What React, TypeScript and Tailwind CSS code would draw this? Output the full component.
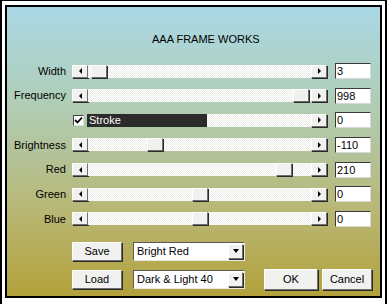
import React from 'react'

type Row = { label: string; value: string; thumb?: number; stroke?: boolean }

// thumb = left offset of the thumb inside the track (track is 223px wide)
const rows: Row[] = [
  { label: 'Width', value: '3', thumb: 3 },
  { label: 'Frequency', value: '998', thumb: 205 },
  { label: '', value: '0', stroke: true },
  { label: 'Brightness', value: '-110', thumb: 59 },
  { label: 'Red', value: '210', thumb: 188 },
  { label: 'Green', value: '0', thumb: 104 },
  { label: 'Blue', value: '0', thumb: 104 },
]

const raised =
  'bg-[#f1f1ef] border border-t-white border-l-white border-r-[#6f6f6f] border-b-[#6f6f6f] shadow-[1px_1px_0_#2a2a2a]'

function ArrowButton({ dir }: { dir: 'left' | 'right' }) {
  return (
    <div className={`w-[16px] h-[13px] shrink-0 flex items-center justify-center ${raised}`}>
      {dir === 'left' ? (
        <div className="w-0 h-0 border-y-[3px] border-y-transparent border-r-[3px] border-r-black" />
      ) : (
        <div className="w-0 h-0 border-y-[3px] border-y-transparent border-l-[3px] border-l-black" />
      )}
    </div>
  )
}

function Track({ children }: { children?: React.ReactNode }) {
  return (
    <div className="relative flex-1 h-[13px] bg-[#f6f6f4] bg-[repeating-conic-gradient(#ffffff_0_25%,#ecece9_0_50%)] bg-size-[2px_2px]">
      {children}
    </div>
  )
}

function Dropdown({ text }: { text: string }) {
  return (
    <div className="w-[112px] h-[19px] flex items-center bg-white border border-t-[#5a5a5a] border-l-[#5a5a5a] border-r-[#e8e8e8] border-b-[#e8e8e8]">
      <span className="flex-1 pl-[3px] text-[11px] leading-none text-black">{text}</span>
      <div className={`w-[15px] h-[15px] mr-[1px] flex items-center justify-center ${raised}`}>
        <div className="w-0 h-0 border-x-[3.5px] border-x-transparent border-t-[4px] border-t-black" />
      </div>
    </div>
  )
}

function Button({ text, w, h }: { text: string; w: string; h: string }) {
  return (
    <div className={`${w} ${h} flex items-center justify-center text-[11px] text-black ${raised}`}>
      {text}
    </div>
  )
}

export default function App() {
  return (
    <div
      className="w-[387px] h-[304px] bg-white border-t border-l-2 border-r-2 border-black pt-[4px] pl-[3px] pr-[3px] pb-[6px]"
      style={{ fontFamily: '"Liberation Sans", Arial, sans-serif' }}
    >
      <div className="h-full border-2 border-black bg-[linear-gradient(to_bottom,#abd8e6_0%,#afcfbb_30%,#b3c39a_50%,#b8b672_72%,#b3a23c_100%)]">
        {/* Title */}
        <div className="pt-[26px] pl-[145px] text-[11px] leading-[13px] text-black">AAA FRAME WORKS</div>

        {/* Slider rows */}
        <div className="mt-[17px] flex flex-col gap-[8.67px]">
          {rows.map((r, i) => (
            <div key={i} className="h-[16px] flex items-center">
              <div className="w-[59px] text-right text-[11px] text-black">{r.label}</div>
              {r.stroke ? (
                <div className="ml-[7px] w-[254px] flex items-center">
                  <div className="w-[11px] h-[11px] bg-white border border-t-[#444] border-l-[#444] border-r-[#ddd] border-b-[#ddd] flex items-center justify-center">
                    <svg width="9" height="9" viewBox="0 0 9 9">
                      <path d="M1 4 L3.5 6.5 L8 1.5" stroke="black" strokeWidth="1.8" fill="none" />
                    </svg>
                  </div>
                  <div className="ml-[3px] flex-1 flex items-center">
                    <Track>
                      <div className="absolute left-0 top-0 h-[13px] w-[120px] bg-[#2b2b2b] text-white text-[11px] leading-[13px] pl-[2px]">
                        Stroke
                      </div>
                    </Track>
                    <ArrowButton dir="right" />
                  </div>
                </div>
              ) : (
                <div className="ml-[6px] w-[255px] flex items-center">
                  <ArrowButton dir="left" />
                  <Track>
                    <div
                      className={`absolute top-0 w-[16px] h-[13px] ${raised}`}
                      style={{ left: r.thumb }}
                    />
                  </Track>
                  <ArrowButton dir="right" />
                </div>
              )}
              <div className="ml-[8px] w-[36px] h-[16px] bg-white border border-t-[#3a3a3a] border-l-[#3a3a3a] border-r-[#d8d8d8] border-b-[#d8d8d8] pl-[1px] text-[11px] leading-[14px] text-black">
                {r.value}
              </div>
            </div>
          ))}
        </div>

        {/* Bottom controls */}
        <div className="mt-[15px] pl-[65px] flex items-center">
          <Button text="Save" w="w-[50px]" h="h-[19px]" />
          <div className="ml-[11px]">
            <Dropdown text="Bright Red" />
          </div>
        </div>
        <div className="mt-[8px] pl-[65px] flex items-center">
          <Button text="Load" w="w-[50px]" h="h-[19px]" />
          <div className="ml-[11px]">
            <Dropdown text="Dark & Light 40" />
          </div>
          <div className="ml-[19px]">
            <Button text="OK" w="w-[54px]" h="h-[21px]" />
          </div>
          <div className="ml-[4px]">
            <Button text="Cancel" w="w-[50px]" h="h-[21px]" />
          </div>
        </div>
      </div>
    </div>
  )
}
